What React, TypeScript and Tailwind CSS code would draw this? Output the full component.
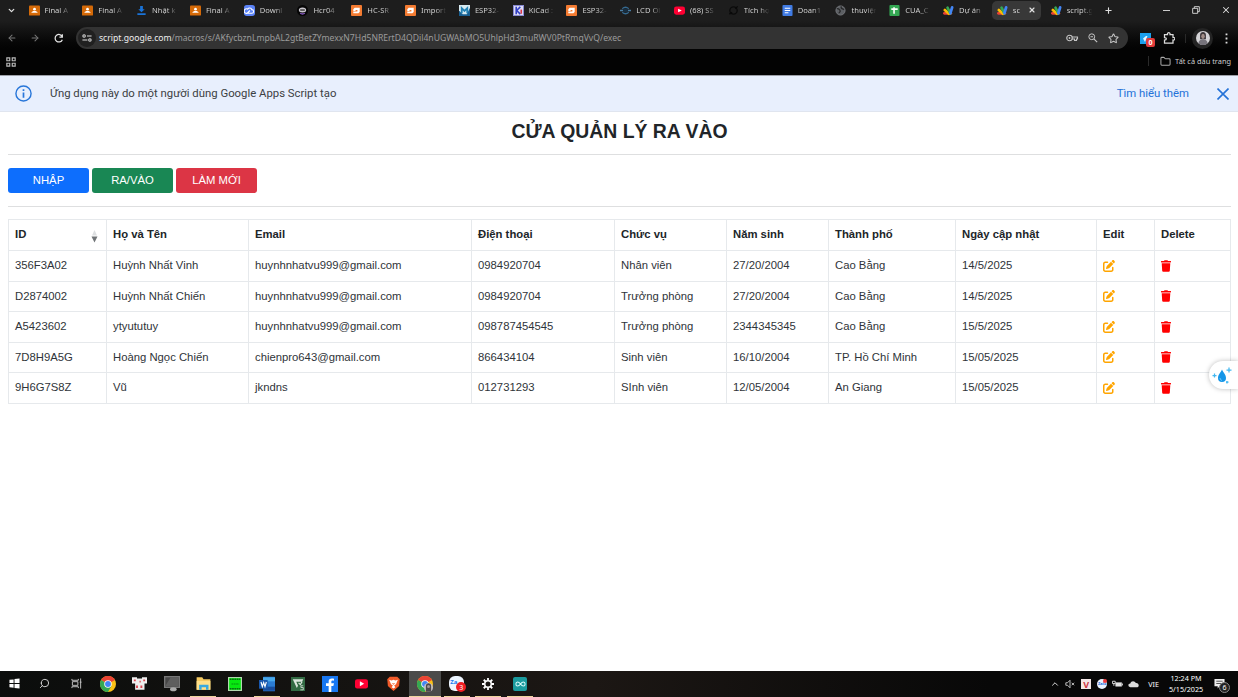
import React from "react";
import { FaTrash } from "react-icons/fa";
import { FaPenToSquare } from "react-icons/fa6";
import { ArrowLeft, ArrowRight, ChevronDown, ChevronUp, Search, X, Plus, Star, Folder } from "lucide-react";

const ui = "font-['Noto_Sans',sans-serif]";

function Svg({ children, className = "size-[11px]", vb = "0 0 24 24" }: { children: React.ReactNode; className?: string; vb?: string }) {
  return <svg viewBox={vb} className={`shrink-0 ${className}`} fill="none">{children}</svg>;
}

function Favicon({ kind }: { kind: string }) {
  switch (kind) {
    case "class":
      return <Svg><rect x="0" y="1" width="24" height="22" rx="2" fill="#d56a08" /><circle cx="12" cy="9" r="3" fill="#fff" /><path d="M5 17c1-5 13-5 14 0z" fill="#fff" /></Svg>;
    case "down":
      return <Svg><path d="M9 2h6v7h4l-7 7-7-7h4zM3 18h18v4H3z" fill="#1a73d8" /></Svg>;
    case "cloud":
      return <Svg><rect width="24" height="24" rx="6" fill="#5b83f7" /><path d="M7 18a5 5 0 1 1 1-9 5 5 0 0 1 9 1 4 4 0 0 1 0 8H7l6-6" stroke="#fff" strokeWidth="2.4" /></Svg>;
    case "hcr":
      return <Svg><circle cx="12" cy="12" r="12" fill="#050505" /><ellipse cx="12" cy="11" rx="8" ry="5.5" fill="#c9c6cd" /><path d="M7 11h10" stroke="#333" strokeWidth="3" /><path d="M7 18q5 3 10 0" stroke="#8b5cc5" strokeWidth="3" /></Svg>;
    case "orange":
      return <Svg><rect width="24" height="24" rx="2" fill="#f47b31" /><path d="M8 6h11v5H10v2H5V9zM19 11v4l-3 3H5v-4h9v-3z" fill="#fff" /></Svg>;
    case "m":
      return <Svg><rect width="24" height="24" fill="#175e91" /><path d="M0 0h24v6L17 20H8L0 12z" fill="#d7eaf1" /><path d="M6 18V7l6 6 6-6v11" stroke="#2382b5" strokeWidth="4" /></Svg>;
    case "kicad":
      return <Svg><rect x="1" y="1" width="22" height="22" fill="#dcdcf5" stroke="#8b8bd7" strokeWidth="2" /><path d="M7 4v16M16 4 8 12l8 8" stroke="#3340c4" strokeWidth="3.5" /><path d="M18 10v9" stroke="#dc3545" strokeWidth="3.5" /></Svg>;
    case "lcd":
      return <Svg><path d="M5 8q7-6 14 0M5 16q7 6 14 0" stroke="#356a91" strokeWidth="3" /><path d="M0 12h7m10 0h7" stroke="#4a7da3" strokeWidth="3" /><rect x="7" y="8" width="10" height="8" fill="#172e40" /></Svg>;
    case "yt":
      return <Svg><rect y="3" width="24" height="18" rx="5" fill="#ff0033" /><path d="m9 8 8 4-8 4z" fill="#fff" /></Svg>;
    case "dark":
      return <Svg><circle cx="12" cy="12" r="8" stroke="#0b0b0b" strokeWidth="3" /><path d="m3 20 6-4M21 3l-5 5" stroke="#090909" strokeWidth="3" /></Svg>;
    case "doc":
      return <Svg><rect x="1" width="22" height="24" rx="2" fill="#407be3" /><path d="M6 7h12M6 12h12M6 17h8" stroke="#fff" strokeWidth="2.5" /></Svg>;
    case "globe":
      return <Svg><circle cx="12" cy="12" r="10" fill="#5d6064" stroke="#777a7e" strokeWidth="2" /><path d="M4 8c5-1 5 2 7 4s-2 4-2 6M14 3c-2 5 1 5 6 7" stroke="#292a2c" strokeWidth="3" /></Svg>;
    case "sheet":
      return <Svg><rect x="1" width="22" height="24" rx="2" fill="#34a853" /><path d="M5 9h14M11 5v14" stroke="#fff" strokeWidth="3.5" /></Svg>;
    default:
      return (
        <Svg>
          <path d="M3 18h14" stroke="#ea4335" strokeWidth="6" strokeLinecap="round" />
          <path d="m4 11 9 8" stroke="#fbbc04" strokeWidth="6" strokeLinecap="round" />
          <path d="m10 6 6 12" stroke="#34a853" strokeWidth="6" strokeLinecap="round" />
          <path d="m20 5-4 13" stroke="#4285f4" strokeWidth="6" strokeLinecap="round" />
        </Svg>
      );
  }
}

const tabs = [
  ["class", "Final A"], ["class", "Final A"], ["down", "Nhật k"], ["class", "Final A"], ["cloud", "Downl"],
  ["hcr", "Hcr04"], ["orange", "HC-SR"], ["orange", "Import"], ["m", "ESP32-"], ["kicad", "KiCad :"],
  ["orange", "ESP32-"], ["lcd", "LCD Ol"], ["yt", "(68) SS"], ["dark", "Tích hợ"], ["doc", "Doan1"],
  ["globe", "thuviện"], ["sheet", "CUA_C"], ["script", "Dự án"], ["script", "sc"], ["script", "script.g"],
];

function TabStrip() {
  return (
    <div className="flex h-[20px] items-center">
      <div className="flex w-[22px] justify-center"><ChevronDown className="size-[9px]" strokeWidth={3.5} /></div>
      <div className="flex h-full items-center">
        {tabs.map(([kind, label], i) => {
          const active = i === 18;
          return (
            <div key={i} className="flex h-[20px] w-[53.8px] items-center">
              <div className={`flex h-[19px] items-center ${active ? "ml-[2px] w-[49px] rounded-[5px] bg-[#383838] pl-[4.5px]" : "w-full pl-[6.5px]"}`}>
                <Favicon kind={kind} />
                <span className={`ml-[5px] overflow-hidden whitespace-nowrap bg-linear-to-r from-[#dedede] from-60% to-[#282828] bg-clip-text text-[7.6px] leading-3 text-transparent ${active ? "w-[10px]" : "w-[25px]"}`}>{label}</span>
                {active && <X className="ml-[5px] size-[8px]" strokeWidth={3.5} />}
              </div>
            </div>
          );
        })}
      </div>
      <Plus className="ml-[6px] size-[9px]" strokeWidth={3} />
      <div className="ml-auto flex items-center pr-[7px]">
        <span className="mr-[22px] h-px w-[7px] bg-[#ccc]" />
        <Svg className="mr-[21px] size-[8px]"><path d="M2 7h15v15H2zM7 7V2h15v15h-5" stroke="#ddd" strokeWidth="2.7" /></Svg>
        <X className="size-[10px]" strokeWidth={2.5} />
      </div>
    </div>
  );
}

function Browser() {
  return (
    <header className={`flex h-[76px] flex-col border-b border-[#9da0a8] bg-linear-to-b from-[#1d1d1d] from-28% to-[#030303] to-65% text-[#dfdfdf] ${ui}`}>
      <TabStrip />
      <div className="mt-[7px] flex h-[22px] items-center">
        <ArrowLeft className="ml-[7px] size-[10px] text-[#777]" strokeWidth={2.5} />
        <ArrowRight className="ml-[13px] size-[10px] text-[#777]" strokeWidth={2.5} />
        <Svg className="ml-[14px] size-[10px]"><path d="M20 3v7h-7M20 9A9 9 0 1 0 20 16" stroke="#e5e5e5" strokeWidth="3" /></Svg>
        <div className="ml-[12px] flex h-[22px] w-[1052px] items-center rounded-full bg-[#333]">
          <div className="ml-[2px] flex size-[18px] items-center justify-center rounded-full bg-[#202020]">
            <Svg className="size-[10px]"><circle cx="5" cy="7" r="3" stroke="#ddd" strokeWidth="2.5" /><circle cx="19" cy="17" r="3" stroke="#ddd" strokeWidth="2.5" /><path d="M12 7h11M1 17h12" stroke="#ddd" strokeWidth="2.5" /></Svg>
          </div>
          <div className="ml-[3px] whitespace-nowrap text-[8.62px] text-[#9b9b9b]"><span className="text-[#eee]">script.google.com</span>/macros/s/AKfycbznLmpbAL2gtBetZYmexxN7Hd5NRErtD4QDil4nUGWAbMO5UhlpHd3muRWV0PtRmqVvQ/exec</div>
          <div className="ml-auto flex items-center pr-[9px] text-[#c4c4c4]">
            <Svg className="mr-[9px] h-[8px] w-[13px]" vb="0 0 26 16"><circle cx="7" cy="8" r="5.5" stroke="currentColor" strokeWidth="2.3" /><circle cx="7" cy="8" r="1.8" fill="currentColor" /><path d="M12 6h11v4h-2v3h-4v-3h-5" stroke="currentColor" strokeWidth="2.2" /></Svg>
            <Svg className="mr-[10px] size-[10px]"><circle cx="9" cy="9" r="7" stroke="currentColor" strokeWidth="2.4" /><path d="m14 14 8 8M6 9h6" stroke="currentColor" strokeWidth="2.8" /></Svg>
            <Star className="size-[11px]" strokeWidth={2.3} />
          </div>
        </div>
        <div className="relative ml-[12px] size-[11px] bg-[#1ca0ee]">
          <Svg className="absolute left-[3px] top-[3px] size-[6px]"><path d="M0 10 12 0h6L8 24z" fill="#e3f4ff" /></Svg>
          <span className="absolute left-[6px] top-[5px] flex size-[9px] items-center justify-center rounded-[2px] bg-[#e23b3b] text-[7px] font-bold leading-none text-white">0</span>
        </div>
        <Svg className="ml-[12px] size-[12px]"><path d="M3 5h6c-1-5 6-5 5 0h6v6c5-1 5 6 0 5v6H3v-6c5 0 5-5 0-5z" stroke="#ddd" strokeWidth="2.5" /></Svg>
        <span className="ml-[10px] h-[9px] w-px bg-[#292929]" />
        <div className="ml-[6px] flex size-[21px] items-center justify-center rounded-full bg-[#242424]">
          <Svg className="size-[14px]"><circle cx="12" cy="12" r="12" fill="#d4d3d6" /><path d="M7 14V7c0-7 10-7 10 0v7z" fill="#3b3539" /><ellipse cx="12" cy="9" rx="3" ry="4.5" fill="#a18d88" /><path d="M4 21c1-9 15-9 16 0-4 4-12 4-16 0" fill="#77747c" /></Svg>
        </div>
        <Svg className="ml-[8px] size-[11px]"><path d="M12 1v4m0 5v4m0 5v4" stroke="#ddd" strokeWidth="4" /></Svg>
      </div>
      <div className="flex h-[25px] items-center">
        <Svg className="ml-[6px] size-[10px]"><path d="M2 2h7v7H2zM15 2h7v7h-7zM2 15h7v7H2zM15 15h7v7h-7z" stroke="#bbb" strokeWidth="2.8" /></Svg>
        <div className="ml-auto flex items-center pr-[7px]">
          <span className="mr-[11px] h-[10px] w-px bg-[#2a2a2a]" />
          <Folder className="mr-[4px] size-[11px] text-[#aaa]" strokeWidth={2.2} />
          <span className="text-[7.4px] text-[#ccc]">Tất cả dấu trang</span>
        </div>
      </div>
    </header>
  );
}

const headers = ["ID", "Họ và Tên", "Email", "Điện thoại", "Chức vụ", "Năm sinh", "Thành phố", "Ngày cập nhật", "Edit", "Delete"];
const rows = [
  ["356F3A02", "Huỳnh Nhất Vinh", "huynhnhatvu999@gmail.com", "0984920704", "Nhân viên", "27/20/2004", "Cao Bằng", "14/5/2025"],
  ["D2874002", "Huỳnh Nhất Chiến", "huynhnhatvu999@gmail.com", "0984920704", "Trưởng phòng", "27/20/2004", "Cao Bằng", "14/5/2025"],
  ["A5423602", "ytyututuy", "huynhnhatvu999@gmail.com", "098787454545", "Trưởng phòng", "2344345345", "Cao Bằng", "15/5/2025"],
  ["7D8H9A5G", "Hoàng Ngọc Chiến", "chienpro643@gmail.com", "866434104", "Sinh viên", "16/10/2004", "TP. Hồ Chí Minh", "15/05/2025"],
  ["9H6G7S8Z", "Vũ", "jkndns", "012731293", "SInh viên", "12/05/2004", "An Giang", "15/05/2025"],
];
const cols = "grid grid-cols-[98px_142px_223px_143px_112px_102px_127px_141px_58px_76px]";
const cell = "flex items-center whitespace-nowrap border-b border-r border-[#e6e9ec] pb-px pl-[6px]";

function DataTable() {
  return (
    <div className="mt-[12px] w-[1223px] border-l border-t border-[#e6e9ec] text-[11.3px] text-[#2f3439]">
      <div className={`${cols} h-[31px] font-bold text-[#212529]`}>
        {headers.map((h, i) => (
          <div key={h} className={`${cell} justify-between`}>
            {h}
            {i === 0 && <Svg className="mr-[8px] mt-[3px] h-[13px] w-[7px]" vb="0 0 14 26"><path d="m7 0 5 11H2z" fill="#dddfe1" /><path d="m7 25-6-12h12z" fill="#707477" /></Svg>}
          </div>
        ))}
      </div>
      {rows.map((r, n) => (
        <div key={r[0]} className={`${cols} ${n === 1 || n === 3 ? "h-[30px]" : "h-[31px]"}`}>
          {r.map((v, i) => <div key={i} className={cell}>{v}</div>)}
          <div className={cell}><FaPenToSquare className="size-[12px] text-[#ffa500]" /></div>
          <div className={cell}><FaTrash className="h-[12px] w-[10px] text-[#ff0000]" /></div>
        </div>
      ))}
    </div>
  );
}

function Chrome() {
  return <Svg className="size-[16px]"><circle cx="12" cy="12" r="12" fill="#fbc116" /><path d="M12 12 1.6 6A12 12 0 0 1 22.4 6z" fill="#ea4335" /><path d="M1.6 6A12 12 0 0 0 12 24l5.2-9L12 12z" fill="#34a853" /><circle cx="12" cy="12" r="5.6" fill="#fff" /><circle cx="12" cy="12" r="4.4" fill="#4285f4" /></Svg>;
}

function AppIcon({ name }: { name: string }) {
  switch (name) {
    case "windows": return <Svg className="size-[11px]"><path d="m1 4 9-1v8H1zm11-2 11-1v10H12zM1 13h9v8l-9-1zm11 0h11v10l-11-1z" fill="#fff" /></Svg>;
    case "search": return <Search className="size-[11px] -scale-x-100 text-[#ddd]" />;
    case "tasks": return <Svg className="size-[11px]"><path d="M2 2v3h14V2M2 22v-3h14v3M3 8h12v8H3zM21 1v22M19 9h4" stroke="#ccc" strokeWidth="2" /></Svg>;
    case "chrome": return <Chrome />;
    case "cards": return <Svg className="size-[15px]"><path d="M0 2h8v10H0zm8 2h8v8H8zm8-2h8v10h-8zM5 12h8v10H5zm8 0h7v10h-7z" fill="#eee" /><path d="M3 7h3m6 2h2m4-2h3M8 15v4m7-4v4" stroke="#db4750" strokeWidth="3" /></Svg>;
    case "monitor": return <Svg className="size-[16px]"><rect x="1" y="1" width="22" height="16" fill="#464646" stroke="#777" strokeWidth="2" /><path d="m2 15 8-13h12v14z" fill="#5e5e5e" /><ellipse cx="14" cy="20" rx="5" ry="3" fill="#aaa" /></Svg>;
    case "folder": return <Svg className="size-[15px]"><path d="M1 2h9l2 3h11v17H1z" fill="#f7cb63" /><path d="M1 8h22v14H1z" fill="#ffe08a" /><path d="M5 14h15v8h-4v-4H9v4H5z" fill="#38a9e0" /></Svg>;
    case "green": return <Svg className="size-[14px]"><rect x="1" y="1" width="22" height="22" fill="#07e810" stroke="#b2d8af" strokeWidth="2" /><path d="M3 4h18M3 20h18" stroke="#086d10" strokeWidth="2.5" strokeDasharray="3 1" /><path d="M6 12h13" stroke="#078d10" strokeWidth="2" strokeDasharray="3 1" /></Svg>;
    case "word": return <Svg className="size-[16px]"><rect x="6" y="1" width="18" height="22" rx="1" fill="#2b7cd3" /><path d="M6 2h18v6H6z" fill="#49a9ec" /><path d="M6 16h18v6H6z" fill="#184c9c" /><rect y="6" width="13" height="13" fill="#1857ad" /><path d="m3 9 2 7 2-6 2 6 2-7" stroke="#fff" strokeWidth="1.7" /></Svg>;
    case "vs": return <Svg className="size-[14px]"><rect width="24" height="24" fill="#326a43" /><path d="M3 4h18l-2 4H9l3 7-2 4z" fill="#dce6dd" /><path d="m13 10 3 3 3-5" stroke="#dce6dd" strokeWidth="2" /><path d="M21 15h-4v3h4v4h-5" stroke="#cdd6cd" strokeWidth="1.5" /></Svg>;
    case "facebook": return <div className="flex size-[16px] justify-center bg-[#1877f2]"><Svg className="size-[16px]"><path d="M10 24v-9H6v-4h4V8c0-4 3-5 8-4v3c-3-.5-4 0-4 2v2h4l-1 4h-3v9z" fill="#fff" /></Svg></div>;
    case "youtube": return <Svg className="size-[13px]"><rect y="4" width="24" height="17" rx="4" fill="#ff0033" /><path d="m9 8 8 4.5L9 17z" fill="#fff" /></Svg>;
    case "brave": return <Svg className="size-[15px]"><path d="m6 1 12 0 4 4-1 11-9 8-9-8L2 5z" fill="#f15a29" /><path d="m5 6 4 1 3-1 3 1 4-1-3 7-3 2 2 3-3 2-3-2 2-3-3-2z" fill="#fff" /><path d="m9 11 3 1 3-1-3 3z" fill="#f15a29" /></Svg>;
    case "profile": return <div className="relative"><Chrome /><Svg className="absolute left-[7px] top-[7px] size-[9px]"><circle cx="12" cy="12" r="12" fill="#c6c1c4" /><path d="M5 23V8c0-10 14-10 14 0v15z" fill="#4e494c" /><circle cx="12" cy="9" r="4" fill="#a39693" /></Svg></div>;
    case "zalo": return <div className={`relative size-[15px] rounded-[6px] bg-[#edf5ff] pl-px pt-[3px] text-[6px] font-bold leading-[7px] text-[#1677ef] ${ui}`}>Za<span className="absolute left-[7px] top-[6px] flex size-[10px] items-center justify-center rounded-full bg-[#f01e24] text-[7px] font-normal text-white">3</span></div>;
    case "settings": return <Svg className="size-[12px]"><circle cx="12" cy="12" r="6.5" stroke="#fff" strokeWidth="3" /><path d="M12 0v5m0 14v5M0 12h5m14 0h5M3.5 3.5 7 7m10 10 3.5 3.5m0-17L17 7M7 17l-3.5 3.5" stroke="#fff" strokeWidth="3.6" /></Svg>;
    default: return <div className="flex size-[14px] items-center justify-center rounded-[2px] bg-[#1b9b9e]"><Svg className="h-[6px] w-[11px]" vb="0 0 24 12"><path d="M12 6c-4-6-10-6-10 0s6 6 10 0 10-6 10 0-6 6-10 0" stroke="#d7fafa" strokeWidth="2.3" /></Svg></div>;
  }
}

const apps = ["windows", "search", "tasks", "chrome", "cards", "monitor", "folder", "green", "word", "vs", "facebook", "youtube", "brave", "profile", "zalo", "settings", "arduino"];
const running = ["folder", "word", "profile", "zalo", "settings", "arduino"];

function Taskbar() {
  return (
    <footer className={`flex h-[26px] bg-linear-to-r from-[#0b0d0c] via-[#1c1714] via-48% to-[#080808] to-80% text-white ${ui}`}>
      <div className="grid grid-cols-[29px_repeat(16,31.7px)]">
        {apps.map((a) => (
          <div key={a} className={`flex h-[26px] flex-col items-center ${a === "profile" ? "bg-[#4b4b4a]" : ""}`}>
            <div className="flex h-[25px] items-center"><AppIcon name={a} /></div>
            {running.includes(a) && <span className={`h-px bg-[#edd59d] ${a === "profile" ? "w-full" : "w-[26px]"}`} />}
          </div>
        ))}
      </div>
      <div className="ml-auto flex items-center pr-[8px]">
        <ChevronUp className="mr-[5px] size-[10px]" />
        <Svg className="mr-[6px] size-[10px]"><path d="M2 9h4l6-6v18l-6-6H2zM16 9l6 6m0-6-6 6" stroke="#ddd" strokeWidth="2" /></Svg>
        <div className="mr-[6px] flex size-[10px] items-center justify-center bg-[#f3e6e6] text-[9px] font-bold leading-none text-[#cb3540]">V</div>
        <div className="relative mr-[5px] flex size-[10px] items-center justify-center rounded-full bg-[#eaf3ff] text-[4px] font-bold text-[#1769db]">Zalo<span className="absolute right-0 top-0 size-[4px] rounded-full bg-[#f23b3b]" /></div>
        <Svg className="mr-[5px] h-[8px] w-[11px]" vb="0 0 24 16"><path d="M8 5h13v8H8z" fill="#e3e3e3" stroke="#ddd" /><path d="M1 2h6v5H1zM4 7v5M23 7v4" stroke="#ddd" strokeWidth="2" /></Svg>
        <Svg className="mr-[9px] h-[8px] w-[11px]" vb="0 0 24 16"><path d="M5 15C-1 14 0 7 5 7 7 0 15 1 17 6c7-1 9 9 2 9z" fill="#ddd" /></Svg>
        <span className="mr-[10px] text-[7.2px]">VIE</span>
        <div className="mr-[11px] w-[34px] whitespace-nowrap text-center text-[7.2px] leading-[11px]"><div>12:24 PM</div><div>5/15/2025</div></div>
        <div className="relative h-[16px] w-[16px]">
          <Svg className="absolute left-0 top-[2px] size-[11px]"><path d="M1 2h22v16H12l-4 5v-5H1z" fill="#eee" /><path d="M5 7h14M5 12h14" stroke="#444" strokeWidth="2" /></Svg>
          <span className="absolute left-[5px] top-[6px] flex size-[11px] items-center justify-center rounded-full border border-[#888] bg-[#222] text-[7px] leading-none">6</span>
        </div>
      </div>
    </footer>
  );
}

export default function App() {
  return (
    <div className="flex h-[697px] w-[1238px] flex-col overflow-hidden bg-white font-['Liberation_Sans',sans-serif]">
      <Browser />
      <div className="flex h-[36px] shrink-0 items-center border-b border-[#e0e5ef] bg-[#e8effd] font-['Roboto',sans-serif] text-[11.35px] text-[#3c4043]">
        <Svg className="ml-[15px] size-[17px] text-[#2876d9]"><circle cx="12" cy="12" r="10.7" stroke="currentColor" strokeWidth="2" /><path d="M12 10.5V18M12 6v2.5" stroke="currentColor" strokeWidth="2.4" /></Svg>
        <span className="ml-[18px]">Ứng dụng này do một người dùng Google Apps Script tạo</span>
        <span className="ml-auto text-[#2472d8]">Tìm hiểu thêm</span>
        <Svg className="ml-[28px] mr-[9px] size-[12px]"><path d="m1 1 22 22m0-22L1 23" stroke="#2472d8" strokeWidth="3.2" /></Svg>
      </div>
      <main className="relative flex flex-1 flex-col pl-[8px] pr-[7px]">
        <h1 className="flex h-[43px] items-center justify-center border-b border-[#dedfe0] pb-[2px] text-[19.4px] font-bold text-[#212529]">CỬA QUẢN LÝ RA VÀO</h1>
        <div className="flex h-[52px] items-center gap-[3px] border-b border-[#dedfe0] text-[11.3px] text-white">
          <button className="h-[25px] w-[81px] rounded-[3px] bg-[#0d6efd]">NHẬP</button>
          <button className="h-[25px] w-[81px] rounded-[3px] bg-[#198754]">RA/VÀO</button>
          <button className="h-[25px] w-[81px] rounded-[3px] bg-[#dc3545]">LÀM MỚI</button>
        </div>
        <DataTable />
        <div className="absolute right-0 top-[249px] flex h-[28px] w-[29px] items-center rounded-l-full bg-white pl-[3px] shadow-[0_0_5px_#0004]">
          <Svg className="size-[20px]" vb="0 0 40 40"><path d="M20 9c2 6 8 10 8 17a8 8 0 0 1-16 0c0-7 6-11 8-17z" fill="#1596e8" /><path d="M5 17v8m-4-4h8M34 5v10m-5-5h10M30 32v5m-2-3h5" stroke="#43b8f1" strokeWidth="2.5" /><path d="M16 26q0 4 4 5" stroke="#70c9fb" strokeWidth="2" /></Svg>
        </div>
      </main>
      <Taskbar />
    </div>
  );
}
